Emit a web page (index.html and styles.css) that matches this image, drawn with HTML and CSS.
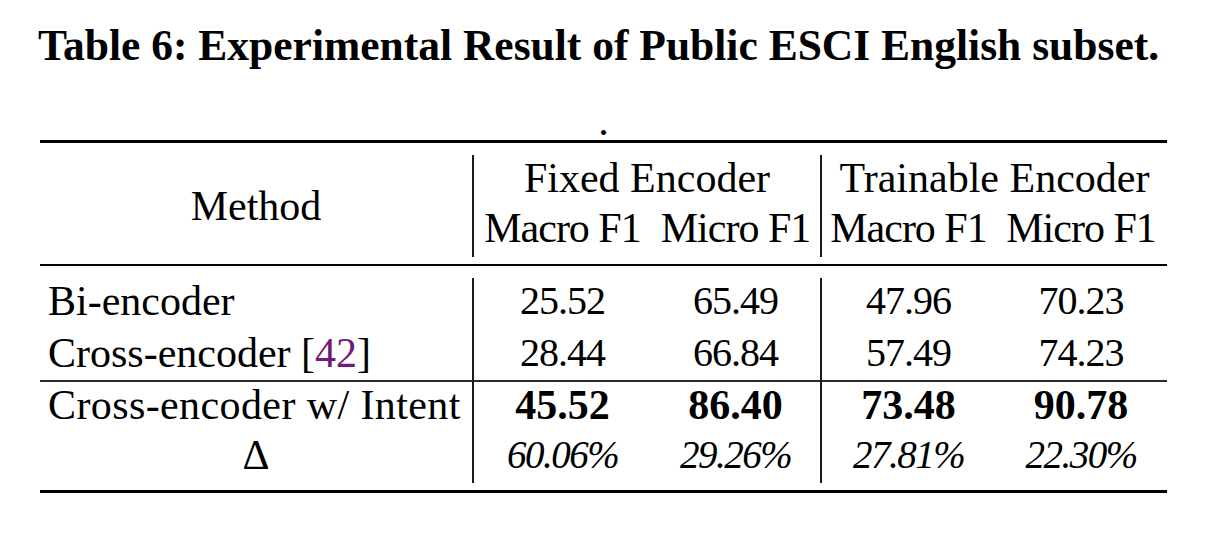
FILE: index.html
```html
<!DOCTYPE html>
<html lang="en">
<head>
<meta charset="utf-8">
<title>Table 6</title>
<link rel="stylesheet" href="styles.css">
</head>
<body>
<div class="page">
  <div class="caption">Table 6: Experimental Result of Public ESCI English subset.</div>
  <div class="dot">.</div>
  <div class="tbl">
    <div class="rule-thick"></div>
    <div class="head">
      <div class="cell method sep">Method</div>
      <div class="cell group sep">Fixed Encoder</div>
      <div class="cell group">Trainable Encoder</div>
      <div class="cell sub">Macro F1</div>
      <div class="cell sub sep">Micro F1</div>
      <div class="cell sub">Macro F1</div>
      <div class="cell sub">Micro F1</div>
    </div>
    <div class="rule-thin"></div>
    <div class="body">
      <div class="cell name sep">Bi-encoder</div>
      <div class="cell num">25.52</div>
      <div class="cell num sep">65.49</div>
      <div class="cell num">47.96</div>
      <div class="cell num">70.23</div>

      <div class="cell name sep under">Cross-encoder [<span class="cite">42</span>]</div>
      <div class="cell num under">28.44</div>
      <div class="cell num sep under">66.84</div>
      <div class="cell num under">57.49</div>
      <div class="cell num under">74.23</div>

      <div class="cell name wide sep">Cross-encoder w/ Intent</div>
      <div class="cell best">45.52</div>
      <div class="cell best sep">86.40</div>
      <div class="cell best">73.48</div>
      <div class="cell best">90.78</div>

      <div class="cell delta sep">Δ</div>
      <div class="cell pct">60.06%</div>
      <div class="cell pct sep">29.26%</div>
      <div class="cell pct">27.81%</div>
      <div class="cell pct">22.30%</div>
    </div>
    <div class="rule-thick"></div>
  </div>
</div>
</body>
</html>
```

FILE: styles.css
```css
html, body {
  margin: 0;
  background: #ffffff;
  color: #000000;
  font-family: "Liberation Serif", "Times New Roman", serif;
}

.page {
  padding-top: 20px;
}

.caption {
  margin-left: 38px;
  font-size: 43.5px;
  font-weight: bold;
  line-height: 50px;
  white-space: nowrap;
}

.dot {
  width: 1127px;
  margin: 36px 0 0 40px;
  height: 30px;
  font-size: 42px;
  line-height: 30px;
  text-align: center;
}

.tbl {
  width: 1127px;
  margin: 4px 0 0 40px;
  font-size: 42px;
}

.rule-thick {
  height: 3px;
  background: #000000;
}

.rule-thin {
  height: 2px;
  background: #000000;
}

.head,
.body {
  display: grid;
  grid-template-columns: 434px 177px 171px 173px 172px;
  margin: 12px 0 7px;
}

.head {
  grid-template-rows: 50px 52px;
}

.body {
  grid-template-rows: 52px 52px 50px 51px;
}

.cell {
  line-height: 46px;
  text-align: center;
  white-space: nowrap;
}

.sep {
  border-right: 2px solid #1a1a1a;
}

.under {
  border-bottom: 2px solid #2a2a2a;
}

.method {
  grid-row: 1 / 3;
  display: flex;
  align-items: center;
  justify-content: center;
}

.group {
  grid-column: span 2;
}

.sub {
  letter-spacing: -1px;
}

.name {
  text-align: left;
  padding-left: 8px;
}

.wide {
  letter-spacing: 0.4px;
}

.cite {
  color: #6e1c74;
}

.num {
  font-size: 40px;
  letter-spacing: -1px;
}

.best {
  font-weight: bold;
}

.pct {
  font-style: italic;
  font-size: 39px;
  letter-spacing: -1.5px;
}
```
